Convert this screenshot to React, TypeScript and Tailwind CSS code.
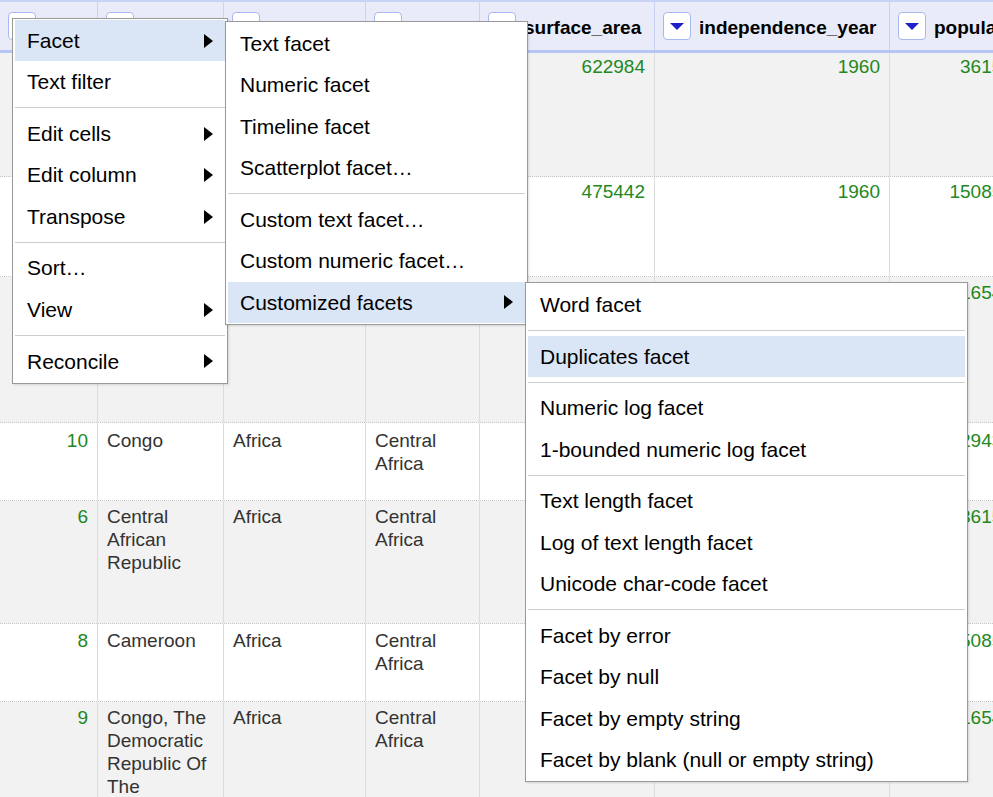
import React from 'react'

type Col = { name: string; w: string; num: boolean }
type Row = { h: string; bg: string; pt: string; cells: string[] }
type Item = { label: string; sub?: boolean; active?: boolean } | 'sep'

const cols: Col[] = [
    { name: 'id', w: 'w-[98px]', num: true },
    { name: 'name', w: 'w-[126px]', num: false },
    { name: 'continent', w: 'w-[142px]', num: false },
    { name: 'region', w: 'w-[114px]', num: false },
    { name: 'surface_area', w: 'w-[175px]', num: true },
    { name: 'independence_year', w: 'w-[235px]', num: true },
    { name: 'population', w: 'w-[154px]', num: true },
]

const rows: Row[] = [
    { h: 'h-[124px]', bg: 'bg-[#f2f2f2]', pt: 'pt-[2px]', cells: ['6', 'Central African Republic', 'Africa', 'Central Africa', '622984', '1960', '3615000'] },
    { h: 'h-[100px]', bg: 'bg-white', pt: 'pt-[3px]', cells: ['8', 'Cameroon', 'Africa', 'Central Africa', '475442', '1960', '15085000'] },
    { h: 'h-[146px]', bg: 'bg-[#f2f2f2]', pt: 'pt-[4px]', cells: ['9', 'Congo, The Democratic Republic Of The', 'Africa', 'Central Africa', '2344858', '1960', '51654000'] },
    { h: 'h-[78px]', bg: 'bg-white', pt: 'pt-[6px]', cells: ['10', 'Congo', 'Africa', 'Central Africa', '342000', '1960', '2943000'] },
    { h: 'h-[123px]', bg: 'bg-[#f2f2f2]', pt: 'pt-[4px]', cells: ['6', 'Central African Republic', 'Africa', 'Central Africa', '622984', '1960', '3615000'] },
    { h: 'h-[78px]', bg: 'bg-white', pt: 'pt-[5px]', cells: ['8', 'Cameroon', 'Africa', 'Central Africa', '475442', '1960', '15085000'] },
    { h: 'h-[160px]', bg: 'bg-[#f2f2f2]', pt: 'pt-[4px]', cells: ['9', 'Congo, The Democratic Republic Of The', 'Africa', 'Central Africa', '2344858', '1960', '51654000'] },
]

const columnMenu: Item[] = [
    { label: 'Facet', sub: true, active: true },
    { label: 'Text filter' },
    'sep',
    { label: 'Edit cells', sub: true },
    { label: 'Edit column', sub: true },
    { label: 'Transpose', sub: true },
    'sep',
    { label: 'Sort…' },
    { label: 'View', sub: true },
    'sep',
    { label: 'Reconcile', sub: true },
]

const facetMenu: Item[] = [
    { label: 'Text facet' },
    { label: 'Numeric facet' },
    { label: 'Timeline facet' },
    { label: 'Scatterplot facet…' },
    'sep',
    { label: 'Custom text facet…' },
    { label: 'Custom numeric facet…' },
    { label: 'Customized facets', sub: true, active: true },
]

const customizedMenu: Item[] = [
    { label: 'Word facet' },
    'sep',
    { label: 'Duplicates facet', active: true },
    'sep',
    { label: 'Numeric log facet' },
    { label: '1-bounded numeric log facet' },
    'sep',
    { label: 'Text length facet' },
    { label: 'Log of text length facet' },
    { label: 'Unicode char-code facet' },
    'sep',
    { label: 'Facet by error' },
    { label: 'Facet by null' },
    { label: 'Facet by empty string' },
    { label: 'Facet by blank (null or empty string)' },
]

const Menu = ({ items, className }: { items: Item[]; className: string }) => (
    <div className={`absolute border border-[#999] bg-white px-[2px] py-[1px] shadow-[1px_1px_2px_rgba(0,0,0,0.12)] ${className}`}>
        {items.map((it, i) =>
            it === 'sep' ? (
                <div key={i} className="my-[4.65px] h-px bg-[#cdcdcd]" />
            ) : (
                <div
                    key={i}
                    className={`flex h-[41.4px] items-center justify-between px-[12px] text-[21px] text-black ${it.active ? 'bg-[#dae6f6]' : ''}`}
                >
                    <span className="whitespace-nowrap">{it.label}</span>
                    {it.sub && (
                        <svg width="9" height="14" viewBox="0 0 9 14">
                            <polygon points="0,0 9,7 0,14" fill="#000" />
                        </svg>
                    )}
                </div>
            )
        )}
    </div>
)

export default function App() {
    return (
        <div className="relative h-screen w-full overflow-hidden bg-white font-['Liberation_Sans',Arial,sans-serif]">
            <div className="w-[1043px]">
                {/* column headers */}
                <div className="flex h-[53px] border-t-2 border-b-[3px] border-t-[#c9d3f6] border-b-[#b6c5f3] bg-[#e9ebf8]">
                    {cols.map((c) => (
                        <div key={c.name} className={`${c.w} flex shrink-0 items-center gap-2 border-r border-[#c9d2f3] pl-[8px]`}>
                            <button className="flex h-[28px] w-[28px] shrink-0 items-center justify-center rounded-[4px] border border-[#a9b9ef] bg-white">
                                <svg width="14" height="7" viewBox="0 0 14 7">
                                    <polygon points="0,0 14,0 7,7" fill="#1f1fc8" />
                                </svg>
                            </button>
                            <span className="whitespace-nowrap pt-[5px] text-[19px] font-bold text-black">{c.name}</span>
                        </div>
                    ))}
                </div>

                {/* data rows */}
                {rows.map((r, ri) => (
                    <div key={ri} className={`flex ${r.h} ${r.bg} border-b border-dotted border-[#c8c8c8]`}>
                        {r.cells.map((v, ci) => (
                            <div
                                key={ci}
                                className={`${cols[ci].w} shrink-0 border-r border-[#dcdcdc] px-[9px] ${r.pt} text-[19px] leading-[23px] ${cols[ci].num ? 'text-right text-[#228822]' : 'text-[#333]'}`}
                            >
                                {v}
                            </div>
                        ))}
                    </div>
                ))}
            </div>

            <Menu items={columnMenu} className="left-[12px] top-[18px] w-[216px]" />
            <Menu items={facetMenu} className="left-[225px] top-[21px] w-[303px]" />
            <Menu items={customizedMenu} className="left-[525px] top-[282px] w-[443px]" />
        </div>
    )
}
